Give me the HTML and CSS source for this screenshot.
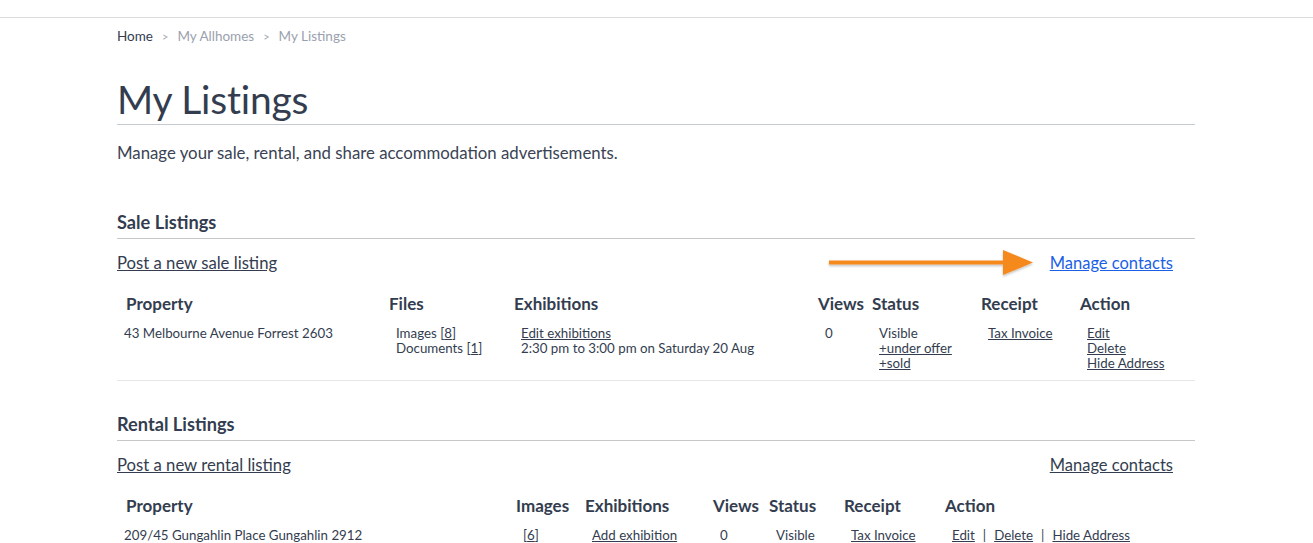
FILE: index.html
```html
<!DOCTYPE html>
<html lang="en">
<head>
    <meta charset="UTF-8">
    <meta name="viewport" content="width=device-width, initial-scale=1.0">
    <title>My Listings</title>
    <link rel="stylesheet" href="styles.css">
</head>
<body>
    <div class="topbar"></div>
    <div class="page">
        <ul class="crumbs">
            <li class="crumb-home">Home</li>
            <li class="sep">&gt;</li>
            <li>My Allhomes</li>
            <li class="sep">&gt;</li>
            <li>My Listings</li>
        </ul>

        <h1 class="page-title">My Listings</h1>
        <p class="intro">Manage your sale, rental, and share accommodation advertisements.</p>

        <!-- sale -->
        <div class="section">
            <h2 class="section-title">Sale Listings</h2>
            <div class="links-row">
                <a href="#" class="post-link">Post a new sale listing</a>
                <span class="contacts-wrap">
                    <svg class="arrow" width="212" height="32" viewBox="0 0 212 32">
                        <defs>
                            <filter id="sh" x="-5%" y="-30%" width="110%" height="160%">
                                <feDropShadow dx="0" dy="1.5" stdDeviation="1.2" flood-color="#000" flood-opacity="0.25"/>
                            </filter>
                        </defs>
                        <g filter="url(#sh)">
                            <rect x="4" y="13.5" width="180" height="4" fill="#f5891f"/>
                            <polygon points="178,3 208,15.5 178,28" fill="#f5891f"/>
                        </g>
                    </svg>
                    <a href="#" class="contacts-link blue">Manage contacts</a>
                </span>
            </div>
            <table class="listing sale">
                <colgroup>
                    <col style="width:263px"><col style="width:125px"><col style="width:304px">
                    <col style="width:54px"><col style="width:109px"><col style="width:99px"><col>
                </colgroup>
                <thead>
                    <tr>
                        <th>Property</th><th>Files</th><th>Exhibitions</th><th>Views</th>
                        <th>Status</th><th>Receipt</th><th>Action</th>
                    </tr>
                </thead>
                <tbody>
                    <tr>
                        <td class="prop">43 Melbourne Avenue Forrest 2603</td>
                        <td>Images [<a href="#">8</a>]<br>Documents [<a href="#">1</a>]</td>
                        <td><a href="#">Edit exhibitions</a><br>2:30 pm to 3:00 pm on Saturday 20 Aug</td>
                        <td>0</td>
                        <td>Visible<br><a href="#">+under offer</a><br><a href="#">+sold</a></td>
                        <td><a href="#">Tax Invoice</a></td>
                        <td><a href="#">Edit</a><br><a href="#">Delete</a><br><a href="#">Hide Address</a></td>
                    </tr>
                </tbody>
            </table>
        </div>

        <!-- rental -->
        <div class="section">
            <h2 class="section-title">Rental Listings</h2>
            <div class="links-row">
                <a href="#" class="post-link">Post a new rental listing</a>
                <a href="#" class="contacts-link">Manage contacts</a>
            </div>
            <table class="listing rental">
                <colgroup>
                    <col style="width:390px"><col style="width:69px"><col style="width:128px">
                    <col style="width:56px"><col style="width:75px"><col style="width:101px"><col>
                </colgroup>
                <thead>
                    <tr>
                        <th>Property</th><th>Images</th><th>Exhibitions</th><th>Views</th>
                        <th>Status</th><th>Receipt</th><th>Action</th>
                    </tr>
                </thead>
                <tbody>
                    <tr>
                        <td class="prop">209/45 Gungahlin Place Gungahlin 2912</td>
                        <td>[<a href="#">6</a>]</td>
                        <td><a href="#">Add exhibition</a></td>
                        <td>0</td>
                        <td>Visible</td>
                        <td><a href="#">Tax Invoice</a></td>
                        <td><a href="#">Edit</a><span class="bar">|</span><a href="#">Delete</a><span class="bar">|</span><a href="#">Hide Address</a></td>
                    </tr>
                </tbody>
            </table>
        </div>
    </div>
</body>
</html>
```

FILE: styles.css
```css
*{
    margin: 0;
    padding: 0;
}
body{
    font-family: Lato, "Open Sans", sans-serif;
    color: #333d4f;
    background: #fff;
}
a{
    color: #333d4f;
}
.topbar{
    height: 17px;
    border-bottom: 1px solid #dcdcdc;
}
.page{
    width: 1078px;
    margin: 0 0 0 117px;
}
.crumbs{
    display: flex;
    gap: 9px;
    list-style: none;
    font-size: 13.5px;
    color: #9aa1ae;
    padding-top: 8px;
    height: 20px;
    align-items: center;
}
.crumbs .crumb-home{
    color: #333d4f;
}
.crumbs .sep{
    font-size: 11px;
    color: #a4aab5;
}
.page-title{
    font-weight: 400;
    font-size: 39px;
    line-height: 48px;
    margin-top: 29px;
    padding-bottom: 1px;
    border-bottom: 1px solid #c6cad2;
    letter-spacing: -0.2px;
}
.intro{
    font-size: 16.8px;
    line-height: 20px;
    margin-top: 18px;
    color: #3a4354;
}
.section{
    margin-top: 48px;
}
.section + .section{
    margin-top: 32px;
}
.section-title{
    font-size: 18.2px;
    font-weight: 700;
    line-height: 22px;
    padding-bottom: 5px;
    border-bottom: 1px solid #c8c8c8;
}
.links-row{
    display: flex;
    justify-content: space-between;
    align-items: center;
    padding: 14px 22px 0 0;
    font-size: 16.7px;
    line-height: 20px;
}
.contacts-link{
    font-size: 16.5px;
}
.contacts-wrap{
    position: relative;
}
.arrow{
    position: absolute;
    right: 136px;
    top: -6px;
}
.blue{
    color: #1a5fe6;
}
.listing{
    border-collapse: collapse;
    width: 100%;
    table-layout: fixed;
    margin-top: 21px;
}
.listing th{
    text-align: left;
    font-size: 17px;
    font-weight: 700;
    padding: 0 0 0 9px;
    line-height: 20px;
    white-space: nowrap;
}
.listing td{
    font-size: 13.3px;
    line-height: 15px;
    padding: 12px 0 9px 16px;
    vertical-align: top;
    white-space: nowrap;
}
.listing td.prop{
    padding-left: 7px;
}
.sale tbody tr{
    border-bottom: 1px solid #e6e6e6;
}
.bar{
    margin: 0 8px;
}
```
